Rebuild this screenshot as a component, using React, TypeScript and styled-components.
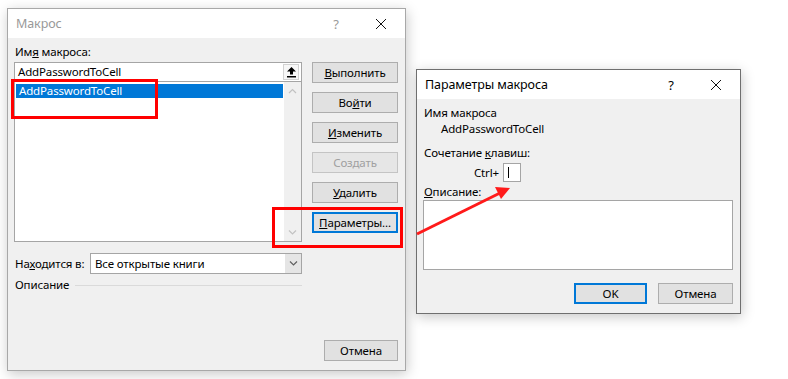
import styled, { createGlobalStyle } from "styled-components";

const GlobalStyle = createGlobalStyle`
    html, body {
        margin: 0;
        padding: 0;
        background: #ffffff;
    }
    body {
        font-family: "Noto Sans", "Liberation Sans", sans-serif;
        font-size: 11.5px;
        letter-spacing: -0.15px;
        color: #000;
    }
`;

const Page = styled.div`
    position: relative;
    width: 788px;
    height: 379px;
    overflow: hidden;
    background: #fff;
`;

// окна на "рабочем столе" — их место и есть содержимое картинки
const Window = styled.div<{ $x: number; $y: number; $w: number; $h: number; $active?: boolean }>`
    position: absolute;
    left: ${(p) => p.$x}px;
    top: ${(p) => p.$y}px;
    width: ${(p) => p.$w}px;
    height: ${(p) => p.$h}px;
    box-sizing: border-box;
    border: 1px solid ${(p) => (p.$active ? "#6f6f6f" : "#a8a8a8")};
    box-shadow: 1px 3px 12px rgba(0, 0, 0, 0.22);
    display: flex;
    flex-direction: column;
    background: #f0f0f0;
`;

const TitleBar = styled.div<{ $active?: boolean }>`
    height: 29px;
    flex: none;
    background: #fff;
    display: flex;
    align-items: center;
    padding-left: 8px;
    color: ${(p) => (p.$active ? "#000" : "#999")};
    font-size: 12.5px;
    letter-spacing: -0.1px;
`;

const TitleText = styled.div`
    flex: 1;
`;

const HelpMark = styled.div`
    width: 12px;
    text-align: center;
    font-size: 13px;
    margin-right: 33px;
`;

const CloseBox = styled.div`
    width: 12px;
    height: 12px;
    margin-right: 18px;
    display: flex;
`;

const Body = styled.div<{ $pad: string }>`
    flex: 1;
    display: flex;
    flex-direction: column;
    padding: ${(p) => p.$pad};
`;

const TopGrid = styled.div`
    display: grid;
    grid-template-columns: 288px 86px;
    column-gap: 10px;
`;

const Column = styled.div<{ $top?: number; $gap?: number }>`
    display: flex;
    flex-direction: column;
    padding-top: ${(p) => p.$top ?? 0}px;
    gap: ${(p) => p.$gap ?? 0}px;
`;

const Label = styled.div<{ $indent?: number; $mt?: number; $w?: number }>`
    line-height: 16px;
    height: 16px;
    white-space: nowrap;
    padding-left: ${(p) => p.$indent ?? 1}px;
    margin-top: ${(p) => p.$mt ?? 0}px;
    width: ${(p) => (p.$w ? `${p.$w}px` : "auto")};
    flex: none;
`;

const NameInput = styled.div`
    margin-top: 2px;
    height: 20px;
    box-sizing: border-box;
    border: 1px solid #a5a5a5;
    background: #fff;
    display: flex;
    align-items: center;
    padding-left: 3px;
`;

const InputText = styled.div`
    flex: 1;
    line-height: 16px;
`;

const UpButton = styled.div`
    width: 16px;
    height: 16px;
    margin-right: 2px;
    box-sizing: border-box;
    border: 1px solid #d2d2d2;
    background: #f7f7f7;
    display: flex;
    align-items: center;
    justify-content: center;
`;

const ListBox = styled.div`
    height: 160px;
    box-sizing: border-box;
    border: 1px solid #a5a5a5;
    border-top: none;
    background: #fff;
    display: flex;
`;

const ListItems = styled.div`
    flex: 1;
    padding: 2px 1px 0 1px;
`;

const ListItem = styled.div<{ $selected?: boolean }>`
    height: 14px;
    line-height: 14px;
    padding-left: 3px;
    background: ${(p) => (p.$selected ? "#0078d7" : "transparent")};
    color: ${(p) => (p.$selected ? "#fff" : "#000")};
`;

const ScrollBar = styled.div`
    width: 17px;
    background: #f0f0f0;
    display: flex;
    flex-direction: column;
    justify-content: space-between;
    align-items: center;
    padding: 6px 0 5px;
`;

const Button = styled.div<{ $w?: number; $focused?: boolean; $disabled?: boolean }>`
    width: ${(p) => p.$w ?? 86}px;
    height: 21px;
    box-sizing: border-box;
    background: ${(p) => (p.$disabled ? "#e6e6e6" : "#e1e1e1")};
    border: ${(p) => (p.$focused ? "2px solid #0078d7" : p.$disabled ? "1px solid #c4c4c4" : "1px solid #adadad")};
    color: ${(p) => (p.$disabled ? "#a0a0a0" : "#000")};
    display: flex;
    align-items: center;
    justify-content: center;
    white-space: nowrap;
`;

const Row = styled.div<{ $mt?: number; $indent?: number; $gap?: number; $w?: number }>`
    display: flex;
    align-items: center;
    margin-top: ${(p) => p.$mt ?? 0}px;
    padding-left: ${(p) => p.$indent ?? 0}px;
    gap: ${(p) => p.$gap ?? 0}px;
    width: ${(p) => (p.$w ? `${p.$w}px` : "auto")};
`;

const Select = styled.div`
    width: 212px;
    height: 21px;
    box-sizing: border-box;
    border: 1px solid #a5a5a5;
    background: #fff;
    display: flex;
    align-items: stretch;
`;

const SelectText = styled.div`
    flex: 1;
    padding-left: 4px;
    display: flex;
    align-items: center;
`;

const SelectArrow = styled.div`
    width: 16px;
    background: #e5e5e5;
    display: flex;
    align-items: center;
    justify-content: center;
`;

const Separator = styled.div`
    flex: 1;
    height: 1px;
    background: #dadada;
    margin-left: 6px;
`;

const Footer = styled.div<{ $gap?: number }>`
    margin-top: auto;
    display: flex;
    justify-content: flex-end;
    gap: ${(p) => p.$gap ?? 0}px;
`;

const KeyBox = styled.div`
    width: 18px;
    height: 19px;
    box-sizing: border-box;
    border: 1px solid #a5a5a5;
    background: #fff;
    display: flex;
    align-items: center;
    padding-left: 4px;
`;

const Caret = styled.div`
    width: 1px;
    height: 11px;
    background: #000;
`;

const TextArea = styled.div`
    height: 70px;
    box-sizing: border-box;
    border: 1px solid #a5a5a5;
    background: #fff;
`;

const Highlight = styled.div<{ $x: number; $y: number; $w: number; $h: number }>`
    position: absolute;
    left: ${(p) => p.$x}px;
    top: ${(p) => p.$y}px;
    width: ${(p) => p.$w}px;
    height: ${(p) => p.$h}px;
    box-sizing: border-box;
    border: 3px solid #ff0000;
    pointer-events: none;
`;

const ArrowLayer = styled.svg`
    position: absolute;
    left: 0;
    top: 0;
    pointer-events: none;
`;

function CloseIcon() {
    return (
        <CloseBox>
            <svg width="12" height="12" viewBox="0 0 12 12">
                <path d="M1 1 L11 11 M11 1 L1 11" stroke="#111" strokeWidth="1" fill="none" />
            </svg>
        </CloseBox>
    );
}

function Chevron({ dir, color }: { dir: "up" | "down"; color: string }) {
    const d = dir === "up" ? "M1 5 L4.5 1.5 L8 5" : "M1 1.5 L4.5 5 L8 1.5";
    return (
        <svg width="9" height="7" viewBox="0 0 9 7">
            <path d={d} stroke={color} strokeWidth="1.2" fill="none" />
        </svg>
    );
}

export default function App() {
    return (
        <Page>
            <GlobalStyle />

            <Window $x={7} $y={8} $w={399} $h={363}>
                <TitleBar>
                    <TitleText>Макрос</TitleText>
                    <HelpMark>?</HelpMark>
                    <CloseIcon />
                </TitleBar>
                <Body $pad="6px 7px 9px 6px">
                    <TopGrid>
                        <Column>
                            <Label>
                                Им<u>я</u> макроса:
                            </Label>
                            <NameInput>
                                <InputText>AddPasswordToCell</InputText>
                                <UpButton>
                                    <svg width="11" height="12" viewBox="0 0 11 12">
                                        <path d="M5.5 1 L10 5.5 H7 V8.5 H4 V5.5 H1 Z" fill="#000" />
                                        <rect x="1" y="10" width="9" height="1.5" fill="#000" />
                                    </svg>
                                </UpButton>
                            </NameInput>
                            <ListBox>
                                <ListItems>
                                    <ListItem $selected>AddPasswordToCell</ListItem>
                                </ListItems>
                                <ScrollBar>
                                    <Chevron dir="up" color="#c2c2c2" />
                                    <Chevron dir="down" color="#c2c2c2" />
                                </ScrollBar>
                            </ListBox>
                        </Column>
                        <Column $top={18} $gap={9}>
                            <Button>
                                <span>
                                    <u>В</u>ыполнить
                                </span>
                            </Button>
                            <Button>
                                <span>
                                    Во<u>й</u>ти
                                </span>
                            </Button>
                            <Button>
                                <span>
                                    <u>И</u>зменить
                                </span>
                            </Button>
                            <Button $disabled>Создать</Button>
                            <Button>
                                <span>
                                    <u>У</u>далить
                                </span>
                            </Button>
                            <Button $focused>
                                <span>
                                    <u>П</u>араметры...
                                </span>
                            </Button>
                        </Column>
                    </TopGrid>
                    <Row $mt={11}>
                        <Label $w={75}>
                            На<u>х</u>одится в:
                        </Label>
                        <Select>
                            <SelectText>Все открытые книги</SelectText>
                            <SelectArrow>
                                <Chevron dir="down" color="#606060" />
                            </SelectArrow>
                        </Select>
                    </Row>
                    <Row $mt={3} $w={288}>
                        <Label>Описание</Label>
                        <Separator />
                    </Row>
                    <Footer>
                        <Button $w={74}>Отмена</Button>
                    </Footer>
                </Body>
            </Window>

            <Window $x={416} $y={69} $w={325} $h={245} $active>
                <TitleBar $active>
                    <TitleText>Параметры макроса</TitleText>
                    <HelpMark>?</HelpMark>
                    <CloseIcon />
                </TitleBar>
                <Body $pad="6px 7px 9px 6px">
                    <Label>Имя макроса</Label>
                    <Label $indent={18}>AddPasswordToCell</Label>
                    <Label $mt={8}>
                        Сочетание <u>к</u>лавиш:
                    </Label>
                    <Row $mt={2} $indent={51} $gap={4}>
                        <span>Ctrl+</span>
                        <KeyBox>
                            <Caret />
                        </KeyBox>
                    </Row>
                    <Label $mt={2}>
                        <u>О</u>писание:
                    </Label>
                    <TextArea />
                    <Footer $gap={11}>
                        <Button $w={73} $focused>
                            OK
                        </Button>
                        <Button $w={75}>Отмена</Button>
                    </Footer>
                </Body>
            </Window>

            <Highlight $x={11} $y={79} $w={147} $h={40} />
            <Highlight $x={272} $y={207} $w={131} $h={41} />

            <ArrowLayer width="788" height="379" viewBox="0 0 788 379">
                <line x1="417" y1="234" x2="500" y2="193" stroke="#ff1a1a" strokeWidth="3" />
                <path d="M510 188 L495 187 L501 199 Z" fill="#ff1a1a" />
            </ArrowLayer>
        </Page>
    );
}
